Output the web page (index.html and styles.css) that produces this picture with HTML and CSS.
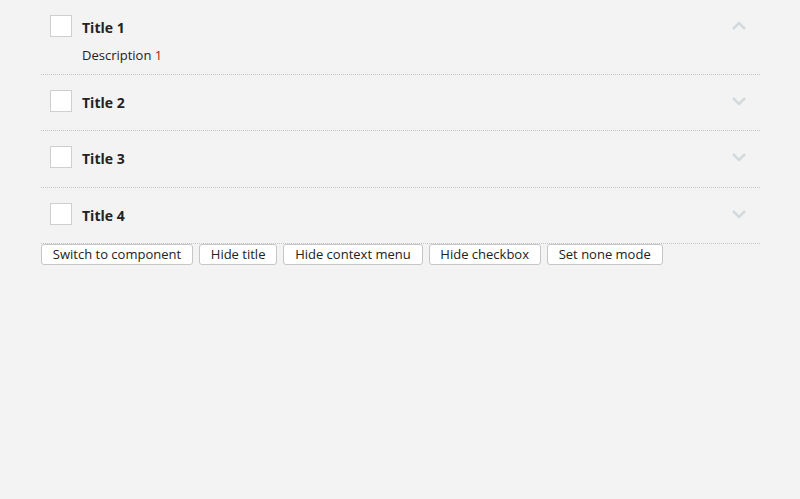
FILE: index.html
```html
<!DOCTYPE html>
<html>
<head>
<meta charset="utf-8">
<link rel="stylesheet" href="styles.css">
</head>
<body>
<div class="page">
  <div class="list">
    <div class="item open">
      <div class="header">
        <span class="check"></span>
        <span class="title">Title 1</span>
        <svg class="chev" width="16" height="10" viewBox="0 0 16 10"><path d="M2 8 L8 2 L14 8" fill="none" stroke="#d3dadd" stroke-width="2.6"/></svg>
      </div>
      <div class="desc">Description <span class="num">1</span></div>
    </div>
    <div class="item">
      <div class="header">
        <span class="check"></span>
        <span class="title">Title 2</span>
        <svg class="chev" width="16" height="10" viewBox="0 0 16 10"><path d="M2 2 L8 8 L14 2" fill="none" stroke="#d3dadd" stroke-width="2.6"/></svg>
      </div>
    </div>
    <div class="item tall">
      <div class="header">
        <span class="check"></span>
        <span class="title">Title 3</span>
        <svg class="chev" width="16" height="10" viewBox="0 0 16 10"><path d="M2 2 L8 8 L14 2" fill="none" stroke="#d3dadd" stroke-width="2.6"/></svg>
      </div>
    </div>
    <div class="item">
      <div class="header">
        <span class="check"></span>
        <span class="title">Title 4</span>
        <svg class="chev" width="16" height="10" viewBox="0 0 16 10"><path d="M2 2 L8 8 L14 2" fill="none" stroke="#d3dadd" stroke-width="2.6"/></svg>
      </div>
    </div>
  </div>
  <div class="buttons">
    <button class="btn">Switch to component</button>
    <button class="btn">Hide title</button>
    <button class="btn">Hide context menu</button>
    <button class="btn">Hide checkbox</button>
    <button class="btn">Set none mode</button>
  </div>
</div>
</body>
</html>
```
FILE: styles.css
```css
html, body {
  margin: 0;
  padding: 0;
  background: #f3f3f3;
  font-family: "Open Sans", "Noto Sans", sans-serif;
  color: #222;
}
.page {
  margin-left: 41px;
  width: 719px;
}
.list {
  display: flex;
  flex-direction: column;
}
.item {
  border-bottom: 1px dotted #c4c4c4;
  height: 56px;
  box-sizing: border-box;
  flex: none;
}
.item.open {
  height: 75px;
}
.item.tall {
  height: 57px;
}
.header {
  display: flex;
  align-items: center;
  height: 22px;
  padding: 15px 0 0 9px;
}
.check {
  width: 20px;
  height: 20px;
  border: 1px solid #cfcfcf;
  background: #fff;
  flex: none;
}
.title {
  margin-left: 10px;
  padding-top: 2px;
  font-weight: 700;
  font-size: 14px;
  flex: 1;
  color: #222;
}
.chev {
  margin-right: 13px;
  flex: none;
}
.desc {
  margin-left: 41px;
  margin-top: 9px;
  font-size: 13px;
  color: #222;
}
.num {
  color: #9a2a22;
}
.buttons {
  display: flex;
  gap: 6px;
}
.btn {
  font-family: "Open Sans", "Noto Sans", sans-serif;
  font-size: 13px;
  color: #222;
  background: #fff;
  border: 1px solid #c6c6c6;
  border-radius: 3px;
  height: 21px;
  padding: 0 10.85px;
  line-height: 19px;
}
```
